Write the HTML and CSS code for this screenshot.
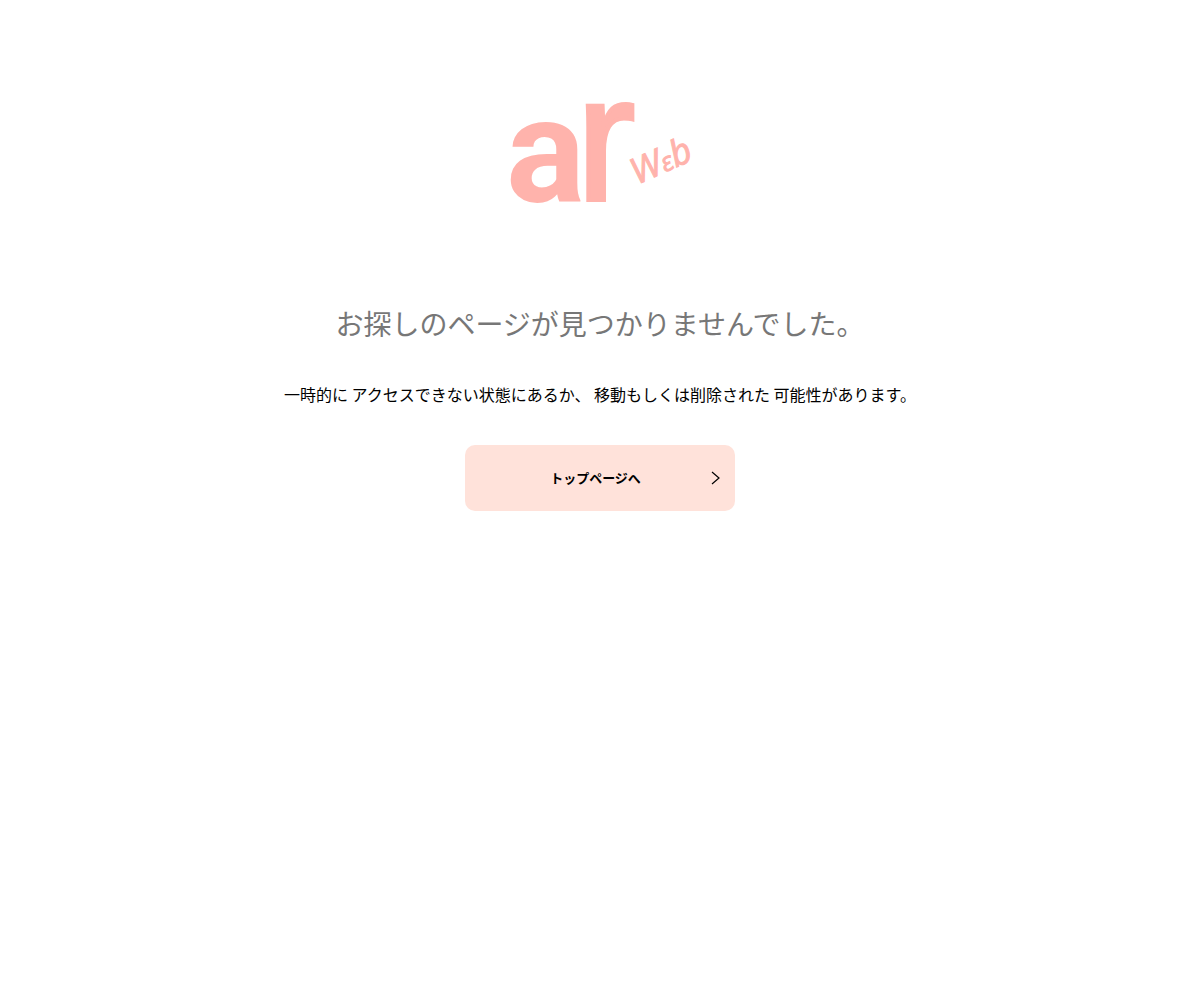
FILE: index.html
```html
<!DOCTYPE html>
<html lang="ja">
<head>
    <meta charset="UTF-8">
    <meta name="viewport" content="width=device-width, initial-scale=1">
    <title>お探しのページが見つかりませんでした。 | ar web</title>
    <link rel="stylesheet" href="styles.css">
</head>
<body>
    <main class="not-found">
        <svg class="logo" viewBox="0 0 180 104" role="img" aria-label="ar web">
            <text class="logo-a" x="-4" y="102">a<tspan class="logo-r" x="66" y="100">r</tspan></text>
            <text class="logo-web" transform="translate(127 85) rotate(-24)">W<tspan class="logo-e">ε</tspan>b</text>
        </svg>
        <h1 class="title">お探しのページが見つかりませんでした。</h1>
        <p class="message">一時的に アクセスできない状態にあるか、 移動もしくは削除された 可能性があります。</p>
        <a class="button" href="/">
            <span class="button-label">トップページへ</span>
            <svg class="arrow" viewBox="0 0 9 14" aria-hidden="true">
                <path d="M1 1l7 6-7 6"/>
            </svg>
        </a>
    </main>
</body>
</html>
```

FILE: styles.css
```css
body {
    margin: 0;
    color: #000;
    font-family: "Noto Sans CJK JP", sans-serif;
    background-color: #fff;
}

.not-found {
    display: flex;
    flex-direction: column;
    align-items: center;
    padding: 100px 20px;
    text-align: center;
}

.logo {
    width: 180px;
    overflow: visible;
    fill: #ffb3ac;
}

.logo-a {
    font: bold 148px Roboto, sans-serif;
}

.logo-r {
    font: 178px "Liberation Sans", sans-serif;
    stroke: #ffb3ac;
    stroke-width: 4px;
}

.logo-web {
    font: italic 36px "Open Sans", sans-serif;
    stroke: #ffb3ac;
    stroke-width: 1px;
}

.logo-e {
    font-size: 26px;
}

.title {
    margin: 99px 0 0;
    color: #777;
    font-size: 28px;
    font-weight: normal;
    line-height: 40px;
}

.message {
    margin: 39px 0 0;
    font-size: 16px;
    line-height: 24px;
}

.button {
    display: flex;
    align-items: center;
    box-sizing: border-box;
    width: 270px;
    max-width: 100%;
    margin-top: 39px;
    padding: 23px 15px;
    color: #000;
    font-size: 13px;
    font-weight: bold;
    line-height: 20px;
    text-decoration: none;
    border-radius: 10px;
    background-color: #ffe2da;
}

.button-label {
    flex: 1;
}

.arrow {
    width: 9px;
    height: 14px;
    fill: none;
    stroke: #000;
    stroke-width: 1.2;
}
```
